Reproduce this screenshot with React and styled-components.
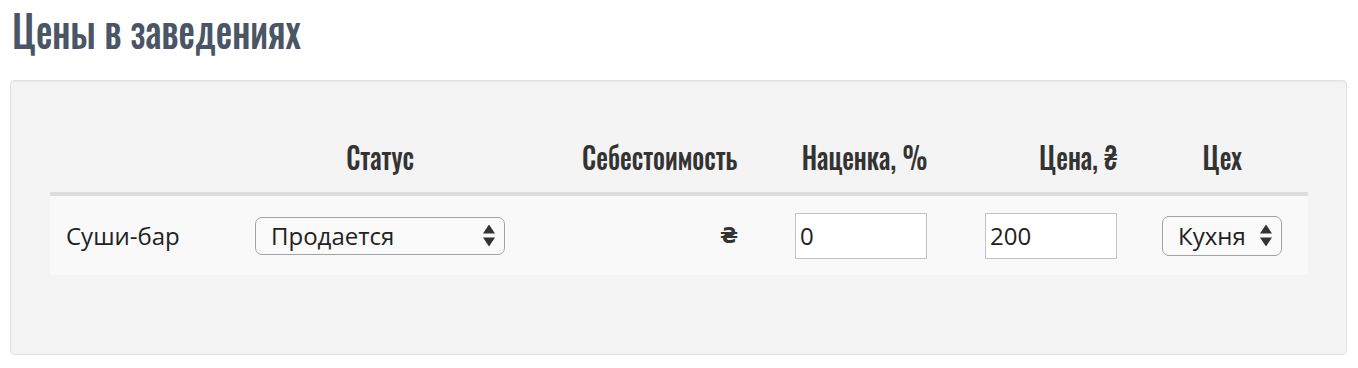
import React from 'react';
import styled, { createGlobalStyle } from 'styled-components';

const GlobalStyle = createGlobalStyle`
  html, body { margin: 0; padding: 0; background: #fff; }
  body { font-family: "Open Sans", "Noto Sans", sans-serif; color: #333; }
  * { box-sizing: border-box; }
`;

const condensed = `
  font-family: "Oswald", "Noto Sans", "DejaVu Sans", sans-serif;
  font-stretch: 62.5%;
`;

const Page = styled.div`
  padding: 0 11px 0 10px;
`;

const Title = styled.h2`
  ${condensed}
  margin: 0;
  padding: 0 0 0 2px;
  font-size: 44px;
  font-weight: 500;
  line-height: 60px;
  color: #4a5566;
`;

/* Oswald is not installed: narrow the condensed fallback to its proportions */
const Narrow = styled.span`
  display: inline-block;
  transform: scaleX(${p => p.$k});
  transform-origin: ${p => p.$origin || 'left'} center;
  white-space: nowrap;
`;

const Panel = styled.section`
  margin-top: 20px;
  background: #f4f4f4;
  border: 1px solid #e3e3e3;
  border-radius: 4px;
  box-shadow: inset 0 1px 1px rgba(0, 0, 0, 0.05);
  padding: 40px 38px 79px 39px;
`;

const Grid = styled.div`
  display: grid;
  grid-template-columns: 205px 250px 233px 189px 190px 191px;
`;

const HeadCell = styled.div`
  ${condensed}
  height: 75px;
  display: flex;
  align-items: flex-end;
  justify-content: ${p => p.$justify || 'flex-start'};
  padding: 0 0 14px ${p => p.$pl || 0}px;
  font-size: 31px;
  font-weight: 500;
  line-height: 44px;
  color: #333;
  border-bottom: 4px solid #dddddd;
`;

const HeadLabel = styled.span`
  display: block;
  width: ${p => (p.$w ? `${p.$w}px` : 'auto')};
  text-align: center;
`;

const Cell = styled.div`
  height: 79px;
  background: #f9f9f9;
  display: flex;
  align-items: center;
  justify-content: ${p => p.$justify || 'flex-start'};
  padding-left: ${p => p.$pl || 0}px;
  font-size: 24px;
  color: #222;
`;

const SelectBox = styled.div`
  position: relative;
  width: ${p => p.$w}px;
  height: ${p => p.$h}px;
  border: 1px solid #a2a2a2;
  border-radius: 7px;
  background: #fafafa;
`;

const NativeSelect = styled.select`
  appearance: none;
  -webkit-appearance: none;
  width: 100%;
  height: 100%;
  border: 0;
  background: transparent;
  font-family: "Open Sans", "Noto Sans", sans-serif;
  font-size: 24px;
  color: #222;
  padding: 0 30px 0 15px;
  outline: none;
`;

const Arrows = styled.svg`
  position: absolute;
  right: 9px;
  top: 50%;
  transform: translateY(-50%);
  pointer-events: none;
`;

const NumInput = styled.input`
  width: 132px;
  height: 46px;
  border: 1px solid #c4c4c4;
  background: #fff;
  font-family: "Open Sans", "Noto Sans", sans-serif;
  font-size: 24px;
  color: #222;
  padding: 0 4px;
  outline: none;
`;

const Currency = styled.span`
  font-family: "DejaVu Sans", "Open Sans", sans-serif;
  font-size: 21px;
  font-weight: 700;
  color: #333;
`;

const HK = 0.847;

function Select({ w, h, value, options }) {
  return (
    <SelectBox $w={w} $h={h}>
      <NativeSelect defaultValue={value}>
        {options.map(o => (
          <option key={o}>{o}</option>
        ))}
      </NativeSelect>
      <Arrows width="12" height="23" viewBox="0 0 12 23">
        <polygon points="6,0 12,9 0,9" fill="#333" />
        <polygon points="0,13 12,13 6,22" fill="#333" />
      </Arrows>
    </SelectBox>
  );
}

export default function App() {
  return (
    <Page>
      <GlobalStyle />
      <Title>
        <Narrow $k={0.835}>Цены в заведениях</Narrow>
      </Title>
      <Panel>
        <Grid>
          <HeadCell />
          <HeadCell $justify="center">
            <Narrow $k={HK} $origin="center">Статус</Narrow>
          </HeadCell>
          <HeadCell $justify="flex-end">
            <Narrow $k={HK} $origin="right">Себестоимость</Narrow>
          </HeadCell>
          <HeadCell $justify="flex-end">
            <Narrow $k={HK} $origin="right">Наценка, %</Narrow>
          </HeadCell>
          <HeadCell $justify="flex-end">
            <Narrow $k={HK} $origin="right">Цена, ₴</Narrow>
          </HeadCell>
          <HeadCell $pl={45}>
            <HeadLabel $w={120}>
              <Narrow $k={HK} $origin="center">Цех</Narrow>
            </HeadLabel>
          </HeadCell>

          <Cell $pl={16}>Суши-бар</Cell>
          <Cell>
            <Select w={250} h={38} value="Продается" options={['Продается', 'Не продается']} />
          </Cell>
          <Cell $justify="flex-end">
            <Currency>₴</Currency>
          </Cell>
          <Cell $justify="flex-end">
            <NumInput defaultValue="0" />
          </Cell>
          <Cell $justify="flex-end">
            <NumInput defaultValue="200" />
          </Cell>
          <Cell $pl={45}>
            <Select w={120} h={40} value="Кухня" options={['Кухня', 'Бар']} />
          </Cell>
        </Grid>
      </Panel>
    </Page>
  );
}
